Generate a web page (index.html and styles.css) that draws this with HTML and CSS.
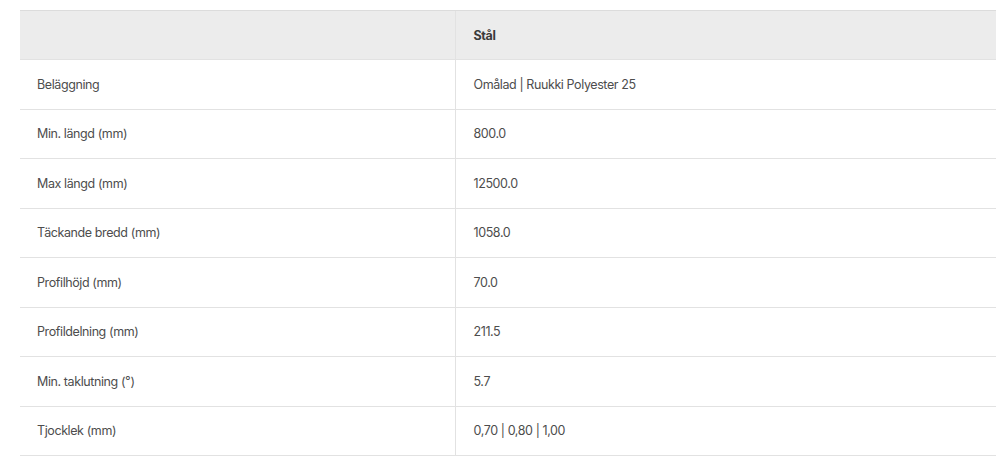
FILE: index.html
```html
<!DOCTYPE html>
<html lang="sv">
<head>
<meta charset="utf-8">
<link rel="stylesheet" href="styles.css">
</head>
<body>
<div class="wrap">
<table class="spec">
<thead>
<tr><th class="c1"></th><th class="c2">Stål</th></tr>
</thead>
<tbody>
<tr><td class="c1">Beläggning</td><td class="c2">Omålad | Ruukki Polyester 25</td></tr>
<tr><td class="c1">Min. längd (mm)</td><td class="c2">800.0</td></tr>
<tr><td class="c1">Max längd (mm)</td><td class="c2">12500.0</td></tr>
<tr><td class="c1">Täckande bredd (mm)</td><td class="c2">1058.0</td></tr>
<tr><td class="c1">Profilhöjd (mm)</td><td class="c2">70.0</td></tr>
<tr><td class="c1">Profildelning (mm)</td><td class="c2">211.5</td></tr>
<tr><td class="c1">Min. taklutning (°)</td><td class="c2">5.7</td></tr>
<tr><td class="c1">Tjocklek (mm)</td><td class="c2">0,70 | 0,80 | 1,00</td></tr>
</tbody>
</table>
</div>
</body>
</html>
```
FILE: styles.css
```css
html, body { margin: 0; padding: 0; background: #fff; }
.wrap { padding: 10px 10px 0 20px; }
.spec {
  width: 976px;
  border-collapse: collapse;
  font-family: "Inter", "Liberation Sans", sans-serif;
  font-size: 12.5px;
  letter-spacing: -0.4px;
  color: #4d4d4d;
}
.spec th, .spec td {
  height: 49.5px;
  box-sizing: border-box;
  padding: 0 0 0 18px;
  text-align: left;
  vertical-align: middle;
  border-bottom: 1px solid #e2e2e2;
}
.spec thead th {
  height: 49px;
  background: #ececec;
  border-top: 1px solid #dcdcdc;
  font-weight: 700;
  color: #3a3a3a;
}
.spec .c1 { width: 435px; padding-left: 17px; }
.spec .c2 { border-left: 1px solid #e2e2e2; padding-left: 18px; }
```
